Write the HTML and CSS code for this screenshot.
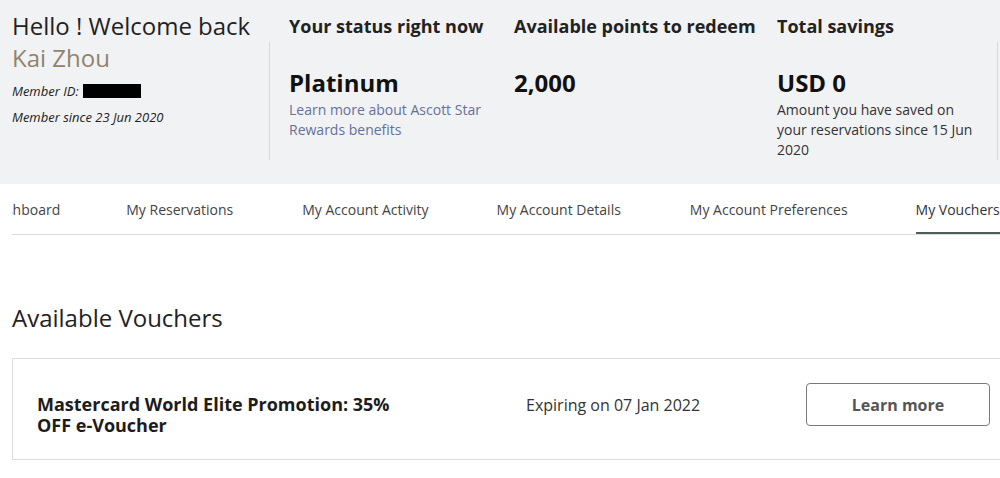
FILE: index.html
```html
<!DOCTYPE html>
<html lang="en">
<head>
<meta charset="utf-8">
<title>My Vouchers</title>
<link rel="stylesheet" href="styles.css">
</head>
<body>
<div class="page">
  <header class="summary">
    <div class="cell c1 r1"><h1 class="hello">Hello ! Welcome back</h1></div>
    <div class="cell c2 r1"><h2 class="stat-title">Your status right now</h2></div>
    <div class="cell c3 r1"><h2 class="stat-title">Available points to redeem</h2></div>
    <div class="cell c4 r1"><h2 class="stat-title">Total savings</h2></div>

    <div class="cell c1 r2 divided">
      <div class="name">Kai Zhou</div>
      <div class="meta first">Member ID: <span class="redact"></span></div>
      <div class="meta">Member since 23 Jun 2020</div>
    </div>
    <div class="cell c2 r2">
      <div class="big">Platinum</div>
      <a class="link" href="#">Learn more about Ascott Star Rewards benefits</a>
    </div>
    <div class="cell c3 r2">
      <div class="big">2,000</div>
    </div>
    <div class="cell c4 r2 divided">
      <div class="big">USD 0</div>
      <p class="note">Amount you have saved on your reservations since 15 Jun 2020</p>
    </div>
  </header>

  <nav class="tabs">
    <ul class="tab-list">
      <li class="tab">Dashboard</li>
      <li class="tab">My Reservations</li>
      <li class="tab">My Account Activity</li>
      <li class="tab">My Account Details</li>
      <li class="tab">My Account Preferences</li>
      <li class="tab active">My Vouchers</li>
    </ul>
  </nav>

  <section class="vouchers">
    <h2 class="section-title">Available Vouchers</h2>
    <div class="voucher">
      <div class="v-title">Mastercard World Elite Promotion: 35% OFF e-Voucher</div>
      <div class="v-expiry">Expiring on 07 Jan 2022</div>
      <button class="v-btn" type="button">Learn more</button>
    </div>
  </section>
</div>
</body>
</html>
```

FILE: styles.css
```css
html, body {
  margin: 0;
  padding: 0;
  overflow: hidden;
  background: #ffffff;
}

body {
  font-family: "Open Sans", "Noto Sans", sans-serif;
  color: #222;
}

.page {
  width: 1040px;
}

/* ===== Summary header ===== */
.summary {
  background: #f1f2f4;
  display: grid;
  grid-template-columns: 258px 244px 263px 221px;
  grid-template-rows: 32px 118px;
  padding: 10px 0 24px 12px;
}

.cell {
  box-sizing: border-box;
}

.c2 { padding-left: 19px; }

.r1 {
  display: flex;
  align-items: center;
}

.divided {
  border-right: 1px solid #d8d9dc;
}

.hello {
  margin: 0;
  font-size: 24px;
  line-height: 32px;
  font-weight: 400;
  color: #222;
}

.stat-title {
  margin: 0;
  font-size: 18px;
  line-height: 24px;
  font-weight: 700;
  color: #222;
}

.name {
  font-size: 24px;
  line-height: 32px;
  color: #93836d;
}

.meta {
  font-size: 13px;
  line-height: 26px;
  font-style: italic;
  color: #222;
}

.meta.first {
  margin-top: 4px;
}

.redact {
  display: inline-block;
  width: 58px;
  height: 14px;
  background: #000;
  vertical-align: -2px;
  margin-left: 1px;
}

.big {
  margin-top: 25px;
  font-size: 24px;
  line-height: 32px;
  font-weight: 700;
  color: #111;
}

.link {
  display: block;
  margin-top: 1px;
  font-size: 14px;
  line-height: 20px;
  color: #66709b;
  text-decoration: none;
  width: 205px;
}

.note {
  margin: 1px 0 0;
  font-size: 14px;
  line-height: 20px;
  color: #333;
  width: 200px;
}

/* ===== Tabs ===== */
.tabs {
  margin-left: 12px;
  overflow: hidden;
  border-bottom: 1px solid #dcdcdc;
}

.tab-list {
  list-style: none;
  margin: 0 0 0 -24px;
  padding: 0;
  display: flex;
  gap: 68px;
  white-space: nowrap;
}

.tab {
  padding: 16px 0 12px;
  font-size: 14px;
  line-height: 20px;
  color: #444;
  border-bottom: 2px solid transparent;
}

.tab:nth-child(2) { margin-left: -2px; }
.tab:nth-child(3) { margin-left: 1px; }
.tab:nth-child(5) { margin-left: 1px; }

.tab.active {
  color: #333;
  border-bottom-color: #4d5d58;
  padding-right: 40px;
}

/* ===== Vouchers ===== */
.vouchers {
  padding: 67px 0 0 12px;
}

.section-title {
  margin: 0;
  font-size: 24px;
  line-height: 32px;
  font-weight: 400;
  color: #222;
}

.voucher {
  margin-top: 24px;
  box-sizing: border-box;
  height: 102px;
  border: 1px solid #dcdcdc;
  display: flex;
  align-items: flex-start;
  padding: 24px 0 0 24px;
}

.v-title {
  width: 380px;
  margin-top: 11px;
  margin-right: 109px;
  font-size: 18px;
  line-height: 21px;
  font-weight: 700;
  color: #1c1c1c;
}

.v-expiry {
  width: 280px;
  margin-top: 10px;
  font-size: 16px;
  line-height: 24px;
  color: #333;
}

.v-btn {
  width: 184px;
  height: 43px;
  box-sizing: border-box;
  background: #fff;
  border: 1px solid #7a7a7a;
  border-radius: 4px;
  font-family: "Open Sans", "Noto Sans", sans-serif;
  font-size: 16px;
  font-weight: 700;
  color: #555;
  cursor: pointer;
}
```
